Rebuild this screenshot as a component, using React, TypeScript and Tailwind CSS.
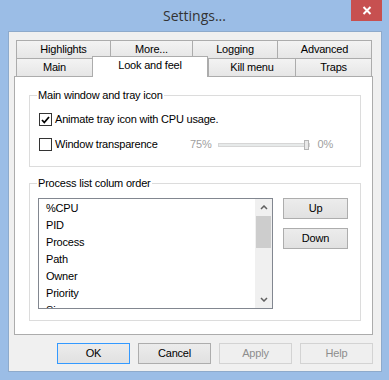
import React from "react";

const rowOne = [
  { label: "Highlights", w: "w-[94px]" },
  { label: "More...", w: "w-[82px]" },
  { label: "Logging", w: "w-[85px]" },
  { label: "Advanced", w: "w-[95px] border-r" },
];

const columns = ["%CPU", "PID", "Process", "Path", "Owner", "Priority", "Size"];

const Tab = ({ label, w }: { label: string; w: string }) => (
  <div
    className={`${w} h-[18px] border-t border-l border-[#acacac] bg-linear-to-b from-[#f3f3f3] to-[#e6e6e6] flex items-center justify-center`}
  >
    {label}
  </div>
);

const Check = ({ checked }: { checked?: boolean }) => (
  <div className="w-[13px] h-[13px] border border-[#333333] bg-white flex items-center justify-center shrink-0">
    {checked && (
      <svg width="9" height="8" viewBox="0 0 9 8">
        <path d="M1 4 L3.3 6.5 L8 1" fill="none" stroke="#000" strokeWidth="1.8" />
      </svg>
    )}
  </div>
);

const Button = ({ label, state }: { label: string; state?: "default" | "disabled" }) => {
  const look =
    state === "default"
      ? "border-[#3399ff] bg-linear-to-b from-[#ececec] to-[#e1e1e1] text-black"
      : state === "disabled"
      ? "border-[#d3d3d3] bg-[#efefef] text-[#8d8d8d]"
      : "border-[#adadad] bg-linear-to-b from-[#ececec] to-[#e1e1e1] text-black";
  return (
    <div className={`w-[73px] h-[21px] border ${look} flex items-center justify-center`}>
      {label}
    </div>
  );
};

export default function App() {
  return (
    <div
      className="w-[389px] h-[380px] bg-[#9bbde6] flex flex-col text-[11px] tracking-[-0.2px] text-black overflow-hidden"
      style={{ fontFamily: '"Liberation Sans", Arial, sans-serif' }}
    >
      {/* title bar */}
      <div className="relative h-[31px] flex items-center justify-center">
        <span
          className="text-[14px] tracking-normal text-[#333333] -mt-[1px]"
          style={{ fontFamily: '"Open Sans", "Noto Sans", sans-serif' }}
        >
          Settings...
        </span>
        <div className="absolute right-[7px] top-0 w-[31px] h-[21px] bg-[#c75050] flex items-center justify-center">
          <svg width="10" height="9" viewBox="0 0 10 9">
            <path d="M1.5 1 L8.5 8 M8.5 1 L1.5 8" stroke="#fff" strokeWidth="2" />
          </svg>
        </div>
      </div>

      {/* client area */}
      <div className="ml-[8px] w-[374px] h-[341px] bg-[#f0f0f0] border border-[#8eaacb] pt-[8px] px-[5px]">
        {/* tabs */}
        <div className="px-[2px]">
          <div className="flex">
            {rowOne.map((t) => (
              <Tab key={t.label} {...t} />
            ))}
          </div>
          <div className="flex h-[18px] items-start">
            <Tab label="Main" w="w-[76px]" />
            <div className="relative z-10 w-[116px] h-[21px] -mt-[2px] border-t border-l border-r border-[#acacac] bg-white flex items-center justify-center pb-[3px]">
              Look and feel
            </div>
            <Tab label="Kill menu" w="w-[87px]" />
            <Tab label="Traps" w="w-[77px] border-r" />
          </div>
        </div>

        {/* tab panel */}
        <div className="w-[359px] h-[259px] border border-[#acacac] bg-white pt-[12px] pl-[14px] pr-[11px]">
          <fieldset className="border border-[#dcdcdc] pl-[9px] pr-[27px] pt-[11px] pb-[15px]">
            <legend className="-ml-[2px] px-[1px] leading-[13px]">Main window and tray icon</legend>
            <div className="flex items-center gap-[3px] h-[13px]">
              <Check checked />
              <span>Animate tray icon with CPU usage.</span>
            </div>
            <div className="flex items-center gap-[3px] h-[13px] mt-[12px]">
              <Check />
              <span>Window transparence</span>
              <div className="ml-auto flex items-center text-[#a0a0a0]">
                <span>75%</span>
                <div className="relative ml-[6px] w-[92px] h-[4px] border border-[#d6d6d6] bg-[#e7eaea]">
                  <div className="absolute right-[0px] -top-[4px] w-[5px] h-[10px] border border-[#b5b5b5] bg-[#e9e9e9]" />
                </div>
                <span className="ml-[8px]">0%</span>
              </div>
            </div>
          </fieldset>

          <fieldset className="mt-[10px] border border-[#dcdcdc] pl-[8px] pt-[8px] pb-[11px]">
            <legend className="-ml-[1px] px-[1px] leading-[13px]">Process list colum order</legend>
            <div className="flex items-start">
              <div className="w-[235px] h-[111px] border border-[#828790] bg-white flex overflow-hidden">
                <div className="flex-1 pl-[7px] pt-[1px]">
                  {columns.map((c) => (
                    <div key={c} className="h-[17px] flex items-center">
                      {c}
                    </div>
                  ))}
                </div>
                <div className="w-[17px] bg-[#f0f0f0] flex flex-col">
                  <div className="h-[17px] flex items-center justify-center">
                    <svg width="8" height="5" viewBox="0 0 8 5">
                      <path d="M1 4 L4 1 L7 4" fill="none" stroke="#606060" strokeWidth="1.5" />
                    </svg>
                  </div>
                  <div className="mx-[1px] h-[32px] bg-[#cdcdcd]" />
                  <div className="flex-1" />
                  <div className="h-[17px] flex items-center justify-center">
                    <svg width="8" height="5" viewBox="0 0 8 5">
                      <path d="M1 1 L4 4 L7 1" fill="none" stroke="#606060" strokeWidth="1.5" />
                    </svg>
                  </div>
                </div>
              </div>
              <div className="ml-[10px] flex flex-col gap-[9px]">
                <div className="w-[65px] h-[21px] border border-[#adadad] bg-linear-to-b from-[#ececec] to-[#e1e1e1] flex items-center justify-center">
                  Up
                </div>
                <div className="w-[65px] h-[21px] border border-[#adadad] bg-linear-to-b from-[#ececec] to-[#e1e1e1] flex items-center justify-center">
                  Down
                </div>
              </div>
            </div>
          </fieldset>
        </div>

        {/* dialog buttons */}
        <div className="mt-[8px] w-[359px] flex justify-end gap-[8px]">
          <Button label="OK" state="default" />
          <Button label="Cancel" />
          <Button label="Apply" state="disabled" />
          <Button label="Help" state="disabled" />
        </div>
      </div>
    </div>
  );
}
